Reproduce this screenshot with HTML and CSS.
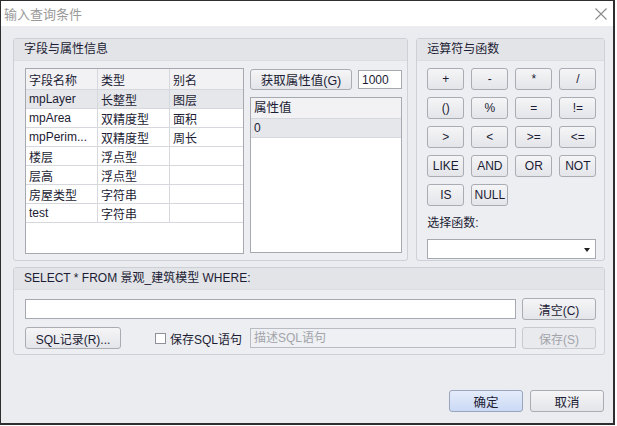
FILE: index.html
```html
<!DOCTYPE html>
<html lang="zh-CN">
    <head>
        <meta charset="UTF-8">
        <title>输入查询条件</title>
        <link rel="stylesheet" href="styles.css">
    </head>
    <body>
        <div class="window">
            <div class="titlebar">
                <span class="title">输入查询条件</span>
                <svg class="close" width="12" height="12" viewBox="0 0 12 12">
                    <path d="M0.5 0.5 L11.5 11.5 M11.5 0.5 L0.5 11.5" stroke="#8a8a8a" stroke-width="1.1" fill="none"/>
                </svg>
            </div>
            <div class="content">
                <div class="top-row">
                    <div class="group fields">
                        <div class="group-head">字段与属性信息</div>
                        <div class="group-body fields-body">
                            <div class="grid-box">
                                <table class="grid">
                                    <tr class="head"><td class="c1">字段名称</td><td class="c2">类型</td><td class="c3">别名</td></tr>
                                    <tr class="sel"><td>mpLayer</td><td>长整型</td><td>图层</td></tr>
                                    <tr><td>mpArea</td><td>双精度型</td><td>面积</td></tr>
                                    <tr><td>mpPerim...</td><td>双精度型</td><td>周长</td></tr>
                                    <tr><td>楼层</td><td>浮点型</td><td></td></tr>
                                    <tr><td>层高</td><td>浮点型</td><td></td></tr>
                                    <tr><td>房屋类型</td><td>字符串</td><td></td></tr>
                                    <tr><td>test</td><td>字符串</td><td></td></tr>
                                </table>
                            </div>
                            <div class="values">
                                <div class="values-top">
                                    <button class="btn get-btn">获取属性值(G)</button>
                                    <input class="field count" type="text" value="1000">
                                </div>
                                <div class="list-box">
                                    <div class="list-head">属性值</div>
                                    <div class="list-row sel">0</div>
                                </div>
                            </div>
                        </div>
                    </div>
                    <div class="group ops">
                        <div class="group-head">运算符与函数</div>
                        <div class="group-body ops-body">
                            <div class="op-grid">
                                <button class="btn op">+</button>
                                <button class="btn op">-</button>
                                <button class="btn op">*</button>
                                <button class="btn op">/</button>
                                <button class="btn op">()</button>
                                <button class="btn op">%</button>
                                <button class="btn op">=</button>
                                <button class="btn op">!=</button>
                                <button class="btn op">&gt;</button>
                                <button class="btn op">&lt;</button>
                                <button class="btn op">&gt;=</button>
                                <button class="btn op">&lt;=</button>
                                <button class="btn op">LIKE</button>
                                <button class="btn op">AND</button>
                                <button class="btn op">OR</button>
                                <button class="btn op">NOT</button>
                                <button class="btn op">IS</button>
                                <button class="btn op">NULL</button>
                            </div>
                            <div class="func-label">选择函数:</div>
                            <div class="combo"><span class="caret"></span></div>
                        </div>
                    </div>
                </div>

                <div class="group sql">
                    <div class="group-head">SELECT * FROM 景观_建筑模型 WHERE:</div>
                    <div class="group-body sql-body">
                        <div class="sql-row">
                            <input class="field where" type="text">
                            <button class="btn side-btn">清空(C)</button>
                        </div>
                        <div class="sql-row">
                            <button class="btn log-btn">SQL记录(R)...</button>
                            <label class="check"><span class="box"></span>保存SQL语句</label>
                            <div class="field desc">描述SQL语句</div>
                            <button class="btn side-btn disabled">保存(S)</button>
                        </div>
                    </div>
                </div>

                <div class="footer">
                    <button class="btn foot-btn default">确定</button>
                    <button class="btn foot-btn">取消</button>
                </div>
            </div>
        </div>
    </body>
</html>
```

FILE: styles.css
```css
body {
    margin: 0;
    background-color: #ffffff;
    font-family: "Liberation Sans", "Noto Sans CJK SC", sans-serif;
    font-size: 12px;
    color: #1c1c34;
}
.window {
    box-sizing: border-box;
    width: 615px;
    height: 425px;
    border-top: 1px solid #2e2e2e;
    border-left: 1px solid #2e2e2e;
    border-right: 2px solid #2e2e2e;
    border-bottom: 2px solid #2e2e2e;
    display: flex;
    flex-direction: column;
}
.titlebar {
    height: 25px;
    background-color: #ffffff;
    display: flex;
    align-items: center;
    justify-content: space-between;
    padding: 0 6px 0 3px;
}
.title {
    color: #9a9a9a;
    font-size: 13px;
}
.content {
    flex: 1;
    background-color: #ebecf0;
    padding: 12px 8px 0 12px;
    display: flex;
    flex-direction: column;
}
.top-row {
    display: flex;
    gap: 8px;
    height: 223px;
}
.group {
    box-sizing: border-box;
    border: 1px solid #cdd0d6;
    border-radius: 3px;
    background-color: #eceef1;
}
.group-head {
    height: 21px;
    line-height: 21px;
    background-color: #e3e4e8;
    border-bottom: 1px solid #dcdde2;
    padding-left: 10px;
    font-size: 12px;
}
.fields {
    width: 396px;
}
.ops {
    width: 189px;
}
.fields-body {
    display: flex;
    gap: 6px;
    padding: 7px 0 0 11px;
}
.grid-box {
    box-sizing: border-box;
    width: 219px;
    height: 186px;
    border: 1px solid #a6a9b0;
    background-color: #ffffff;
}
.grid {
    border-collapse: collapse;
    width: 217px;
}
.grid td {
    height: 18px;
    padding: 0 0 0 3px;
    border: 1px solid #d6d8dd;
    border-top: none;
    white-space: nowrap;
}
.grid tr td:first-child {
    border-left: none;
}
.grid tr td:last-child {
    border-right: none;
}
.grid .head td {
    height: 20px;
    background-color: #f2f2f4;
}
.grid .c1 {
    width: 68px;
}
.grid .c2 {
    width: 68px;
}
.grid .sel td {
    background-color: #e6e7ea;
}
.values {
    width: 152px;
}
.values-top {
    display: flex;
    align-items: center;
    gap: 6px;
    padding-top: 1px;
}
.btn {
    box-sizing: border-box;
    height: 22px;
    padding: 0;
    font-family: "Liberation Sans", "Noto Sans CJK SC", sans-serif;
    font-size: 12px;
    color: #1c1c34;
    border: 1px solid #a9acb3;
    border-radius: 3px;
    background: linear-gradient(#f5f5f7, #e4e5e9);
}
.get-btn {
    width: 102px;
    height: 21px;
    font-size: 12.5px;
}
.field {
    box-sizing: border-box;
    height: 20px;
    border: 1px solid #a6a9b0;
    background-color: #ffffff;
    font-family: "Liberation Sans", "Noto Sans CJK SC", sans-serif;
    font-size: 12px;
    color: #1c1c34;
    padding: 0 3px;
    margin: 0;
}
.count {
    width: 44px;
    height: 19px;
}
.list-box {
    box-sizing: border-box;
    margin-top: 7px;
    width: 152px;
    height: 156px;
    border: 1px solid #a6a9b0;
    background-color: #ffffff;
}
.list-head {
    height: 20px;
    line-height: 20px;
    padding-left: 3px;
    background-color: #f2f2f4;
    border-bottom: 1px solid #d6d8dd;
    font-size: 12.5px;
}
.list-row {
    height: 18px;
    line-height: 18px;
    padding-left: 3px;
    border-bottom: 1px solid #d6d8dd;
}
.list-row.sel {
    background-color: #e6e7ea;
}
.ops-body {
    padding: 7px 0 0 10px;
}
.op-grid {
    display: grid;
    grid-template-columns: repeat(4, 37px);
    grid-auto-rows: 22px;
    gap: 7px;
}
.op {
    width: 37px;
}
.func-label {
    margin-top: 7px;
    height: 20px;
    line-height: 20px;
}
.combo {
    box-sizing: border-box;
    position: relative;
    margin-top: 6px;
    width: 169px;
    height: 20px;
    border: 1px solid #a6a9b0;
    background-color: #ffffff;
}
.caret {
    position: absolute;
    right: 5px;
    top: 8px;
    border-left: 3px solid transparent;
    border-right: 3px solid transparent;
    border-top: 4px solid #202020;
}
.sql {
    margin-top: 6px;
    height: 88px;
}
.sql-body {
    padding: 8px 0 0 11px;
    display: flex;
    flex-direction: column;
    gap: 7px;
}
.sql-row {
    display: flex;
    align-items: center;
    gap: 6px;
}
.sql-row > * {
    flex-shrink: 0;
}
.where {
    width: 491px;
}
.side-btn {
    width: 74px;
}
.side-btn.disabled {
    color: #a2a4aa;
    border-color: #c8cad0;
    background: #e9eaee;
}
.log-btn {
    width: 96px;
}
.check {
    display: flex;
    align-items: center;
    margin-left: 28px;
    width: 89px;
    white-space: nowrap;
    font-size: 12px;
}
.box {
    box-sizing: border-box;
    width: 11px;
    height: 11px;
    border: 1px solid #8e9199;
    background-color: #ffffff;
    margin-right: 4px;
}
.desc {
    width: 266px;
    line-height: 18px;
    color: #a2a4aa;
    background-color: #eef0f3;
    border-color: #b9bcc2;
}
.footer {
    margin-top: auto;
    margin-bottom: 11px;
    margin-right: 1px;
    display: flex;
    justify-content: flex-end;
    gap: 7px;
}
.foot-btn {
    width: 74px;
    font-size: 12.5px;
}
.foot-btn.default {
    background: linear-gradient(#e4ecfb, #cbd9f5);
    border-color: #9aa6bd;
}
```
